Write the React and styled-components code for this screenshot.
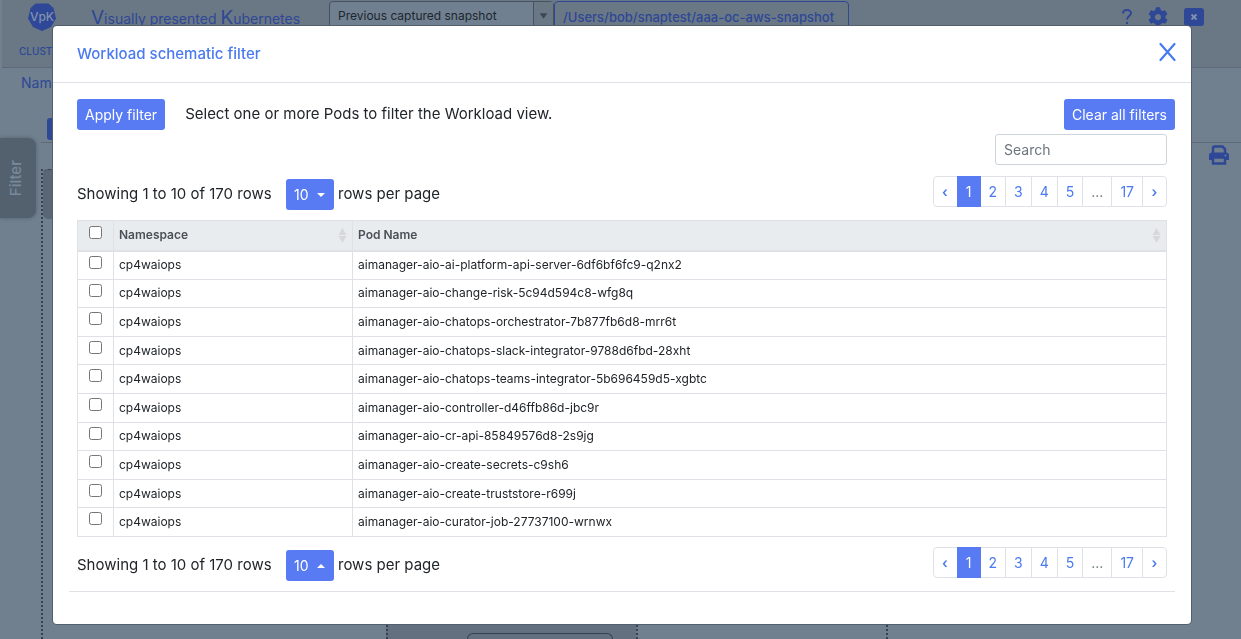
import React, { useState } from "react";
import styled, { createGlobalStyle } from "styled-components";

const blue = "#587af3";
const link = "#4a7af0";
const dimBlue = "#2e4796";
const line = "#dee2e6";

const pods = [
  "aimanager-aio-ai-platform-api-server-6df6bf6fc9-q2nx2",
  "aimanager-aio-change-risk-5c94d594c8-wfg8q",
  "aimanager-aio-chatops-orchestrator-7b877fb6d8-mrr6t",
  "aimanager-aio-chatops-slack-integrator-9788d6fbd-28xht",
  "aimanager-aio-chatops-teams-integrator-5b696459d5-xgbtc",
  "aimanager-aio-controller-d46ffb86d-jbc9r",
  "aimanager-aio-cr-api-85849576d8-2s9jg",
  "aimanager-aio-create-secrets-c9sh6",
  "aimanager-aio-create-truststore-r699j",
  "aimanager-aio-curator-job-27737100-wrnwx",
];

const GlobalStyle = createGlobalStyle`
  * { box-sizing: border-box; }
  body {
    margin: 0;
    overflow: hidden;
    background: #70808f;
    color: #212529;
    font-family: Inter, "Liberation Sans", sans-serif;
    font-size: 15px;
    line-height: 24px;
  }
  button, input { font-family: inherit; }
  button { cursor: pointer; }
`;

/* ---- page behind the dialog ---- */

const Page = styled.div`
  display: flex;
  flex-direction: column;
  height: 100vh;
  overflow: hidden;
`;

const TopBar = styled.header`
  flex: none;
  margin-left: 2px;
  height: 68px;
  background: #6a7885;
  border-bottom: 1px solid #5d6b79;
`;

const TopRow = styled.div`
  display: flex;
  align-items: flex-start;
  height: 38px;
  padding: 0 37px 0 25px;
`;

const Logo = styled.svg`
  flex: none;
  width: 30px;
  height: 32px;
  margin-right: 34px;
`;

const Brand = styled.div`
  width: 238px;
  padding-top: 6px;
  color: ${dimBlue};
  white-space: nowrap;
  font-size: 14px;
  big { font-size: 19px; }
`;

const Snapshot = styled.button`
  display: flex;
  align-items: stretch;
  width: 225px;
  height: 32px;
  margin-top: 1px;
  padding: 0;
  border: 1px solid #46535f;
  border-radius: 4px;
  background: #708090;
  color: #1d262e;
  font-size: 12px;
  line-height: 28px;
  text-align: left;
  span { flex: 1; padding-left: 8px; }
  svg { width: 20px; height: 28px; border-left: 1px solid #46535f; background: #6a7885; }
`;

const Path = styled.div`
  width: 295px;
  margin-top: 1px;
  padding: 3px 8px;
  border: 1px solid ${dimBlue};
  border-radius: 4px;
  color: ${dimBlue};
  font-size: 13px;
  font-weight: 500;
  white-space: nowrap;
`;

const Tools = styled.div`
  display: flex;
  align-items: center;
  gap: 16px;
  margin-left: auto;
  padding-top: 7px;
`;

const IconButton = styled.button`
  display: flex;
  padding: 0;
  border: 0;
  background: none;
  color: ${(p) => (p.$bright ? link : dimBlue)};
`;

const Tab = styled.a`
  display: inline-block;
  padding: 0 17px;
  color: ${dimBlue};
  font-size: 10px;
  font-weight: 500;
  line-height: 18px;
  text-decoration: none;
`;

const SubBar = styled.div`
  display: flex;
  flex: none;
  flex-direction: column;
  height: 74px;
  padding-left: 21px;
  padding-top: 3px;
  color: ${dimBlue};
  font-size: 14px;
`;

const StubButton = styled.button`
  width: 60px;
  height: 22px;
  margin: 23px 0 0 26px;
  border: 0;
  border-radius: 3px;
  background: ${dimBlue};
`;

const Workspace = styled.main`
  display: flex;
  flex: 1;
`;

const SideRail = styled.div`
  flex: none;
  width: 41px;
`;

const FilterTab = styled.button`
  display: flex;
  align-items: center;
  justify-content: center;
  width: 36px;
  height: 80px;
  margin-top: -4px;
  padding: 0 5px 0 0;
  border: 0;
  border-radius: 0 8px 8px 0;
  background: #53616e;
  box-shadow: 0 0 4px #53616e;
  color: #78899a;
  font-size: 15px;
  font-weight: 500;
  span { writing-mode: vertical-rl; transform: rotate(180deg); }
`;

const Canvas = styled.section`
  display: flex;
  flex: 1;
  border-top: 1px solid #5d6b79;
  padding-top: 26px;
`;

const Lane = styled.div`
  display: flex;
  flex-direction: column;
  flex: ${(p) => (p.$width ? `0 0 ${p.$width}px` : "1")};
  justify-content: flex-end;
  border-left: 2px dotted #35434f;
  background: ${(p) => (p.$dark ? "#627080" : "transparent")};
`;

const LaneHead = styled.div`
  width: 100%;
  height: 50px;
  margin-bottom: auto;
  border-top: 1px dashed #35434f;
  border-radius: 5px 0 0 5px;
  background: #586773;
`;

const LaneBox = styled.div`
  width: 146px;
  height: 6px;
  margin-left: 79px;
  border: 1px solid #35434f;
  border-bottom: 0;
  border-radius: 6px 6px 0 0;
`;

const PrintRail = styled.div`
  flex: none;
  width: 32px;
  padding-top: 2px;
  border-top: 1px solid #5d6b79;
`;

/* ---- dialog ---- */

const Overlay = styled.div`
  position: fixed;
  inset: 0;
  padding: 26px 50px 15px 53px;
`;

const Dialog = styled.div`
  display: flex;
  flex-direction: column;
  min-height: 100%;
  border-radius: 4px;
  background: #fff;
  box-shadow: 0 0 0 1px #53606c;
`;

const DialogHeader = styled.header`
  display: flex;
  align-items: center;
  justify-content: space-between;
  height: 57px;
  padding: 0 15px 0 24px;
  border-bottom: 1px solid ${line};
  > button { padding-bottom: 4px; }
`;

const Title = styled.h2`
  margin: 0;
  color: ${link};
  font-size: 15px;
  font-weight: 500;
`;

const Body = styled.div`
  padding: 16px;
`;

const ActionRow = styled.div`
  display: flex;
  align-items: flex-start;
  padding-left: 8px;
`;

const PrimaryButton = styled.button`
  display: flex;
  align-items: center;
  gap: 8px;
  height: 31px;
  padding: 0 8px;
  border: 0;
  border-radius: 3px;
  background: ${blue};
  color: #fff;
  font-size: 14px;
  line-height: 21px;
  white-space: nowrap;
`;

const Hint = styled.p`
  flex: 1;
  margin: 3px 20px 0;
`;

const Inset = styled.div`
  padding: 0 8px;
`;

const Search = styled.input`
  display: block;
  width: 172px;
  height: 31px;
  margin: 4px 0 0 auto;
  padding: 0 8px;
  border: 1px solid #ced4da;
  border-radius: 3px;
  font-size: 14px;
  &::placeholder { color: #6c757d; opacity: 1; }
`;

const PagerRow = styled.div`
  display: flex;
  align-items: flex-start;
  justify-content: space-between;
  height: 44px;
  margin-top: ${(p) => (p.$bottom ? 10 : 11)}px;
`;

const PageInfo = styled.div`
  display: flex;
  align-items: center;
  padding-top: 3px;
  line-height: 29px;
  white-space: nowrap;
  > span { height: 31px; }
  > span:first-child { min-width: 199px; }
  > button { min-width: 48px; margin: 0 4px 0 10px; }
`;

const Pages = styled.ul`
  display: flex;
  height: 31px;
  margin: 0;
  padding: 0;
  border: 1px solid ${line};
  border-radius: 4px;
  list-style: none;
`;

const PageItem = styled.li`
  border-left: ${(p) => (p.$first || p.$active || p.$afterActive ? 0 : 1)}px solid ${line};
`;

const PageLink = styled.a`
  display: block;
  min-width: ${(p) => (p.$active ? 24 : 23)}px;
  height: 31px;
  margin: -1px 0;
  padding: 0 ${(p) => (p.$arrow ? 7 : 8)}px;
  background: ${(p) => (p.$active ? blue : "transparent")};
  color: ${(p) => (p.$active ? "#fff" : p.$muted ? "#6c757d" : link)};
  font-size: 14px;
  font-weight: ${(p) => (p.$arrow ? 600 : 400)};
  line-height: 31px;
  text-align: center;
  text-decoration: none;
`;

const Table = styled.table`
  width: 100%;
  height: 317px;
  border-collapse: collapse;
  table-layout: fixed;
  font-size: 12px;
  line-height: 18px;
  th, td {
    padding: 0 5px;
    border: 1px solid ${line};
    text-align: left;
  }
  th {
    height: 30px;
    background: #e9ecef;
    border-bottom-width: 2px;
    color: #495057;
    font-weight: 600;
  }
  tbody td { height: 28px; }
`;

const CheckCell = styled.td`
  && { text-align: center; vertical-align: top; padding-top: ${(p) => (p.as ? 5 : 4)}px; }
`;

const Check = styled.input`
  display: block;
  width: 13px;
  height: 13px;
  margin: 0 auto;
`;

const SortHead = styled.div`
  display: flex;
  align-items: center;
  justify-content: space-between;
`;

const Divider = styled.hr`
  margin: 0;
  border: 0;
  border-top: 1px solid ${line};
`;

function Caret({ up }) {
  return (
    <svg width="8" height="4" viewBox="0 0 8 4" aria-hidden="true">
      <path d={up ? "M0 4L4 0L8 4Z" : "M0 0H8L4 4Z"} fill="currentColor" />
    </svg>
  );
}

function SortIcon() {
  return (
    <svg width="9" height="15" viewBox="0 0 9 15" aria-hidden="true">
      <path d="M4.5 0L8.5 7H.5ZM.5 8H8.5L4.5 15Z" fill="#d6d8da" />
    </svg>
  );
}

function Pager({ up }) {
  const items = ["‹", "1", "2", "3", "4", "5", "...", "17", "›"];
  return (
    <PagerRow $bottom={up}>
      <PageInfo>
        <span>Showing 1 to 10 of 170 rows</span>
        <PrimaryButton type="button" aria-haspopup="listbox">
          10 <Caret up={up} />
        </PrimaryButton>
        <span>rows per page</span>
      </PageInfo>
      <nav aria-label={up ? "Pages below table" : "Pages above table"}>
        <Pages>
          {items.map((t, i) => (
            <PageItem key={t} $first={i === 0} $active={i === 1} $afterActive={i === 2}>
              <PageLink href="#" $active={i === 1} $arrow={t === "‹" || t === "›"} $muted={t === "..."}>{t}</PageLink>
            </PageItem>
          ))}
        </Pages>
      </nav>
    </PagerRow>
  );
}

export default function App() {
  const [checked, setChecked] = useState([]);
  const toggle = (pod) =>
    setChecked((c) => (c.includes(pod) ? c.filter((p) => p !== pod) : [...c, pod]));

  return (
    <>
      <GlobalStyle />
      <Page>
        <TopBar>
          <TopRow>
            <Logo viewBox="0 0 30 32" aria-label="VpK">
              <path d="M8.500 3.500H21.500L26.500 8L29 18.500L24 27L15 31L6 27L1 18.500L3.500 8Z" fill={dimBlue} />
              <text x="15" y="20.500" textAnchor="middle" fontSize="12" fontWeight="500" fill="#8192ad">VpK</text>
            </Logo>
            <Brand><big>V</big>isually presented <big>K</big>ubernetes</Brand>
            <Snapshot type="button">
              <span>Previous captured snapshot</span>
              <svg viewBox="0 0 20 28"><path d="M6 11H14L10 17Z" fill="#3b4853" /></svg>
            </Snapshot>
            <Path>/Users/bob/snaptest/aaa-oc-aws-snapshot</Path>
            <Tools>
              <IconButton type="button" aria-label="Help">
                <svg width="10" height="16" viewBox="0 0 10 16" fill="none" stroke="currentColor" strokeWidth="2">
                  <path d="M1 4.500C1 2 3 1 5 1S9 2.200 9 4.300C9 7 5 7 5 10.500" />
                  <circle cx="5" cy="14" r="1.200" fill="currentColor" stroke="none" />
                </svg>
              </IconButton>
              <IconButton type="button" aria-label="Settings">
                <svg width="20" height="20" viewBox="0 0 512 512" fill="currentColor">
                  <path d="M487.400 315.700l-42.600-24.600c4.300-23.200 4.300-47 0-70.200l42.600-24.600c4.900-2.800 7.100-8.600 5.500-14-11.100-35.600-30-67.800-54.700-94.600-3.800-4.100-10-5.100-14.800-2.300L380.800 110c-17.900-15.400-38.500-27.300-60.800-35.100V25.800c0-5.600-3.900-10.500-9.400-11.700-36.700-8.200-74.300-7.800-109.200 0-5.500 1.200-9.400 6.100-9.400 11.700V75c-22.200 7.900-42.800 19.800-60.800 35.100L88.700 85.500c-4.900-2.800-11-1.900-14.800 2.300-24.700 26.700-43.600 58.900-54.700 94.600-1.700 5.400.6 11.200 5.500 14L67.300 221c-4.300 23.200-4.300 47 0 70.200l-42.600 24.600c-4.900 2.800-7.100 8.600-5.500 14 11.100 35.600 30 67.800 54.700 94.600 3.800 4.100 10 5.100 14.800 2.300l42.600-24.600c17.900 15.400 38.500 27.300 60.800 35.100v49.200c0 5.600 3.900 10.500 9.400 11.700 36.700 8.200 74.300 7.800 109.200 0 5.500-1.200 9.400-6.100 9.400-11.700v-49.200c22.200-7.900 42.800-19.800 60.800-35.100l42.600 24.600c4.900 2.800 11 1.900 14.800-2.300 24.700-26.700 43.600-58.900 54.700-94.600 1.500-5.500-.7-11.300-5.600-14.100zM256 336c-44.100 0-80-35.900-80-80s35.900-80 80-80 80 35.900 80 80-35.900 80-80 80z" />
                </svg>
              </IconButton>
              <IconButton type="button" aria-label="Close session">
                <svg width="20" height="18" viewBox="0 0 20 18">
                  <rect width="20" height="18" rx="3" fill="currentColor" />
                  <path d="M7.500 6.500L12.500 11.500M12.500 6.500L7.500 11.500" stroke="#8192ad" strokeWidth="1.800" />
                </svg>
              </IconButton>
            </Tools>
          </TopRow>
          <Tab href="#">CLUSTER</Tab>
        </TopBar>
        <SubBar>
          <span>Namespace</span>
          <StubButton type="button" aria-label="Workload view" />
        </SubBar>
        <Workspace>
          <SideRail>
            <FilterTab type="button"><span>Filter</span></FilterTab>
          </SideRail>
          <Canvas>
            <Lane $width={345}><LaneHead /></Lane>
            <Lane $width={250} $dark><LaneBox /></Lane>
            <Lane $width={250} />
            <Lane />
          </Canvas>
          <PrintRail>
            <IconButton type="button" aria-label="Print">
              <svg width="20" height="20" viewBox="0 0 20 20">
                <path d="M4 8V3Q4 1.500 5.500 1.500H13.500L16 4V8" fill="none" stroke="currentColor" strokeWidth="2.500" />
                <path d="M3 7.500H17Q20 7.500 20 10.500V15H0V10.500Q0 7.500 3 7.500Z" fill="currentColor" />
                <rect x="4" y="12.500" width="12" height="6" fill="#70808f" stroke="currentColor" strokeWidth="2.500" />
                <circle cx="16.500" cy="10.500" r="1" fill="#70808f" />
              </svg>
            </IconButton>
          </PrintRail>
        </Workspace>
      </Page>

      <Overlay>
        <Dialog role="dialog" aria-modal="true" aria-labelledby="dialog-title">
          <DialogHeader>
            <Title id="dialog-title">Workload schematic filter</Title>
            <IconButton type="button" aria-label="Close" $bright>
              <svg width="17" height="20" viewBox="0 0 17 20">
                <path d="M1.500 2L15.500 18M15.500 2L1.500 18" stroke="currentColor" strokeWidth="2.200" strokeLinecap="round" />
              </svg>
            </IconButton>
          </DialogHeader>
          <Body>
            <ActionRow>
              <PrimaryButton type="button">Apply filter</PrimaryButton>
              <Hint>Select one or more Pods to filter the Workload view.</Hint>
              <PrimaryButton type="button" onClick={() => setChecked([])}>Clear all filters</PrimaryButton>
            </ActionRow>
            <Inset>
              <Search type="search" placeholder="Search" aria-label="Search" />
              <Pager />
              <Table>
                <colgroup>
                  <col style={{ width: 36 }} />
                  <col style={{ width: 239 }} />
                  <col />
                </colgroup>
                <thead>
                  <tr>
                    <CheckCell as="th">
                      <Check
                        type="checkbox"
                        aria-label="Select all"
                        checked={checked.length === pods.length}
                        onChange={() => setChecked(checked.length === pods.length ? [] : pods)}
                      />
                    </CheckCell>
                    <th><SortHead>Namespace <SortIcon /></SortHead></th>
                    <th><SortHead>Pod Name <SortIcon /></SortHead></th>
                  </tr>
                </thead>
                <tbody>
                  {pods.map((pod) => (
                    <tr key={pod}>
                      <CheckCell>
                        <Check type="checkbox" aria-label={pod} checked={checked.includes(pod)} onChange={() => toggle(pod)} />
                      </CheckCell>
                      <td>cp4waiops</td>
                      <td>{pod}</td>
                    </tr>
                  ))}
                </tbody>
              </Table>
              <Pager up />
            </Inset>
            <Divider />
          </Body>
        </Dialog>
      </Overlay>
    </>
  );
}
